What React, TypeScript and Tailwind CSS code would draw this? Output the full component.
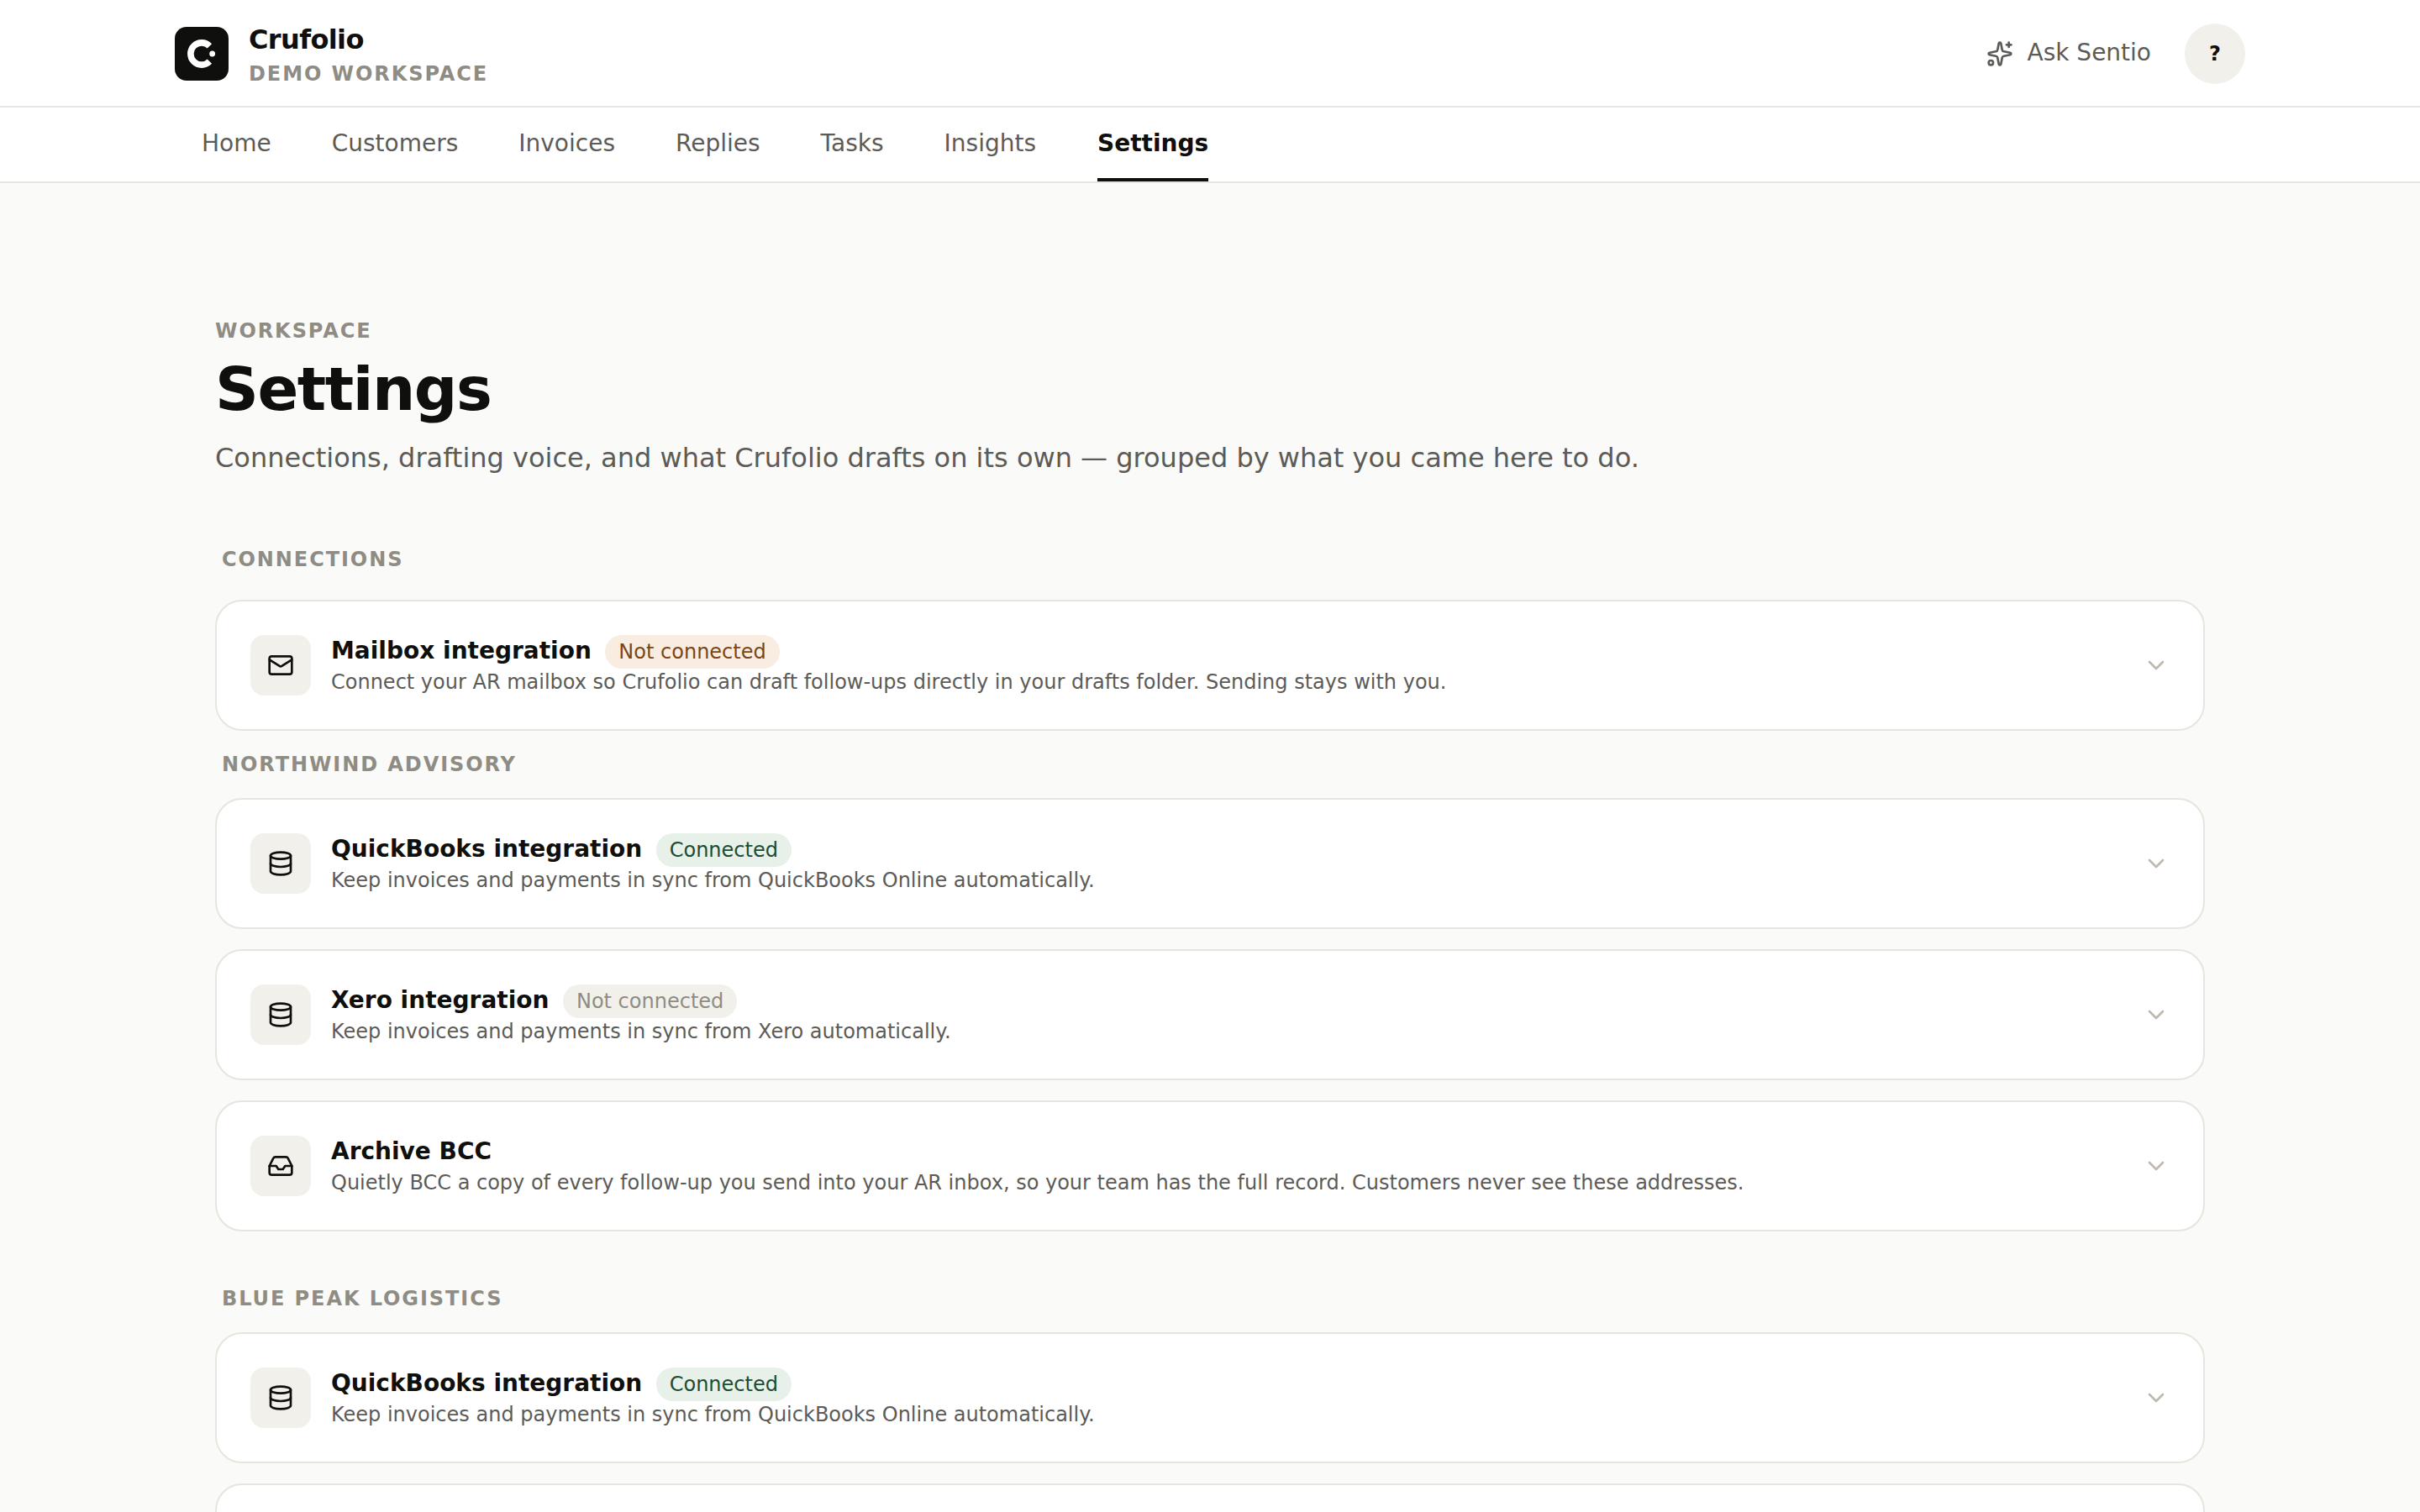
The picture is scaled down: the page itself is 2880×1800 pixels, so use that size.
import React from 'react';
import { ChevronDown, Database, Inbox, Mail, Sparkles, type LucideIcon } from 'lucide-react';

type BadgeTone = 'warning' | 'success' | 'neutral';

type Integration = {
  title: string;
  description: string;
  icon: LucideIcon;
  badge?: { label: string; tone: BadgeTone };
};

const navItems = ['Home', 'Customers', 'Invoices', 'Replies', 'Tasks', 'Insights', 'Settings'];

const badgeTones: Record<BadgeTone, string> = {
  warning: 'bg-[#f8ede0] text-[#7c4516]',
  success: 'bg-[#e7f0e9] text-[#1a4d33]',
  neutral: 'bg-[#f2f0eb] text-[#8f8c84]',
};

const mailbox: Integration = {
  title: 'Mailbox integration',
  description:
    'Connect your AR mailbox so Crufolio can draft follow-ups directly in your drafts folder. Sending stays with you.',
  icon: Mail,
  badge: { label: 'Not connected', tone: 'warning' },
};

const quickbooks: Integration = {
  title: 'QuickBooks integration',
  description: 'Keep invoices and payments in sync from QuickBooks Online automatically.',
  icon: Database,
  badge: { label: 'Connected', tone: 'success' },
};

const xero: Integration = {
  title: 'Xero integration',
  description: 'Keep invoices and payments in sync from Xero automatically.',
  icon: Database,
  badge: { label: 'Not connected', tone: 'neutral' },
};

const archive: Integration = {
  title: 'Archive BCC',
  description:
    'Quietly BCC a copy of every follow-up you send into your AR inbox, so your team has the full record. Customers never see these addresses.',
  icon: Inbox,
};

const Logo: React.FC = () => (
  <svg viewBox="0 0 64 64" className="size-16 shrink-0" aria-hidden="true">
    <rect width="64" height="64" rx="14" fill="#0f0f0d" />
    <path d="M41.4 22.8 A13.15 13.15 0 1 0 41.4 41.2" fill="none" stroke="#fff" strokeWidth="7.6" />
    <circle cx="44.7" cy="32" r="3.5" fill="#fff" />
  </svg>
);

const Header: React.FC = () => (
  <header className="bg-white">
    <div className="h-32 border-b-2 border-[#e8e4df] pt-0.5">
      <div className="mx-auto flex h-full w-[2464px] items-center justify-between">
        <div className="flex items-center gap-6">
          <Logo />
          <div className="pt-2">
            <div className="text-[32px] leading-10 font-bold tracking-[-0.02em]">Crufolio</div>
            <div className="text-2xl leading-[42px] font-bold tracking-[0.08em] text-[#8f8c84] uppercase">
              Demo workspace
            </div>
          </div>
        </div>
        <div className="flex items-center gap-10">
          <button className="flex items-center gap-[17px] text-[28px] leading-10 text-[#5c5b57]">
            <Sparkles size={32} />
            <span className="pb-0.5">Ask Sentio</span>
          </button>
          <button className="flex size-18 items-center justify-center rounded-full bg-[#f2f0eb] text-2xl font-bold">
            ?
          </button>
        </div>
      </div>
    </div>
    <nav className="h-[90px] border-b-2 border-[#e8e4df]">
      <div className="mx-auto flex h-full w-[2400px] gap-18 text-[28px]">
        {navItems.map((item) => (
          <a
            key={item}
            className={
              item === 'Settings'
                ? 'ml-px flex items-center border-b-4 border-[#0f0f0d] pt-0.5 font-bold'
                : 'flex items-center border-b-4 border-transparent pt-0.5 text-[#5c5b57]'
            }
          >
            {item}
          </a>
        ))}
      </div>
    </nav>
  </header>
);

const SectionLabel: React.FC<{ children: React.ReactNode }> = ({ children }) => (
  <h2 className="px-2 text-2xl leading-9 font-bold tracking-[0.08em] text-[#8f8c84] uppercase">{children}</h2>
);

const Card: React.FC<{ children?: React.ReactNode }> = ({ children }) => (
  <div className="flex h-[156px] items-center gap-6 rounded-[32px] border-2 border-[#e8e4df] bg-white px-10">
    {children}
  </div>
);

const IntegrationCard: React.FC<{ item: Integration }> = ({ item }) => {
  const Icon = item.icon;
  return (
    <Card>
      <div className="flex size-18 shrink-0 items-center justify-center rounded-2xl bg-[#f2f0eb]">
        <Icon size={32} />
      </div>
      <div className="h-18 min-w-0 flex-1">
        <div className="flex h-10 items-center gap-[16.5px]">
          <h3 className="pb-0.5 text-[28px] leading-9 font-bold">{item.title}</h3>
          {item.badge && (
            <span className={`rounded-full px-4 text-2xl leading-10 ${badgeTones[item.badge.tone]}`}>
              {item.badge.label}
            </span>
          )}
        </div>
        <p className="text-2xl leading-8 text-[#5c5b57]">{item.description}</p>
      </div>
      <ChevronDown size={32} className="shrink-0 text-[#bfbab0]" />
    </Card>
  );
};

const App: React.FC = () => {
  return (
    <div className="h-[1800px] overflow-hidden bg-[#fafaf8] font-['DejaVu_Sans',sans-serif] text-[#0f0f0d]">
      <Header />
      <main className="mx-auto w-[2368px] pt-[156px]">
        <p className="text-2xl leading-10 font-bold tracking-[0.08em] text-[#8f8c84] uppercase">Workspace</p>
        <h1 className="mt-[9px] text-[72px] leading-[80px] font-bold tracking-[-0.02em]">Settings</h1>
        <p className="mt-[18px] text-[32px] leading-12 text-[#5c5b57]">
          Connections, drafting voice, and what Crufolio drafts on its own — grouped by what you came here to do.
        </p>

        <section className="mt-[79px]">
          <SectionLabel>Connections</SectionLabel>
          <div className="mt-[30px]">
            <IntegrationCard item={mailbox} />
          </div>
        </section>

        <section className="mt-[22px]">
          <SectionLabel>Northwind Advisory</SectionLabel>
          <div className="mt-[22px] space-y-6">
            <IntegrationCard item={quickbooks} />
            <IntegrationCard item={xero} />
            <IntegrationCard item={archive} />
          </div>
        </section>

        <section className="mt-[62px]">
          <SectionLabel>Blue Peak Logistics</SectionLabel>
          <div className="mt-[22px] space-y-6">
            <IntegrationCard item={quickbooks} />
            <Card />
          </div>
        </section>
      </main>
    </div>
  );
};

export default App;
